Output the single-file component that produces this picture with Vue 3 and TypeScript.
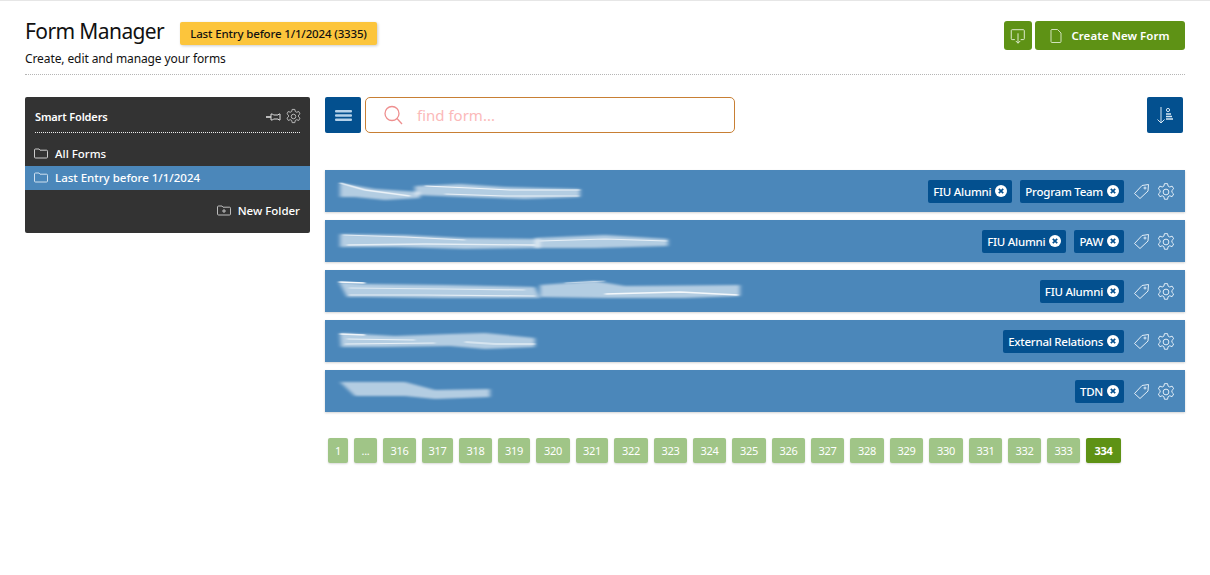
<script setup lang="ts">
interface Stroke { d: string; w: number; o: number }
interface Row { tags: string[]; fill: string[]; streaks: Stroke[] }

const rows: Row[] = [
  {
    tags: ['FIU Alumni', 'Program Team'],
    fill: ['M5 13 L40 19 L85 22 L85 28 L50 30 L20 27 L5 27 Z', 'M80 16 L125 14 L170 17 L245 19 L245 27 L190 29 L130 27 L80 25 Z'],
    streaks: [
      { d: 'M5 13 L30 20 L75 26', w: 1.6, o: 0.75 },
      { d: 'M90 16 L135 18 L175 20 L245 20', w: 1.2, o: 0.85 },
      { d: 'M110 24 L170 26 L244 26', w: 1.2, o: 0.7 },
      { d: 'M120 13 L150 13', w: 1, o: 0.5 },
    ],
  },
  {
    tags: ['FIU Alumni', 'PAW'],
    fill: ['M5 14 L70 15 L130 18 L205 19 L205 28 L130 29 L60 27 L5 27 Z', 'M200 18 L270 15 L333 19 L333 26 L260 28 L200 28 Z'],
    streaks: [
      { d: 'M8 15 L70 17 L130 20', w: 1.2, o: 0.7 },
      { d: 'M12 25 L90 24 L200 25', w: 1.3, o: 0.65 },
      { d: 'M205 21 L270 19 L332 21', w: 1.2, o: 0.7 },
    ],
  },
  {
    tags: ['FIU Alumni'],
    fill: ['M4 12 L30 14 L110 15 L200 17 L205 28 L110 28 L30 27 L12 27 Z', 'M205 15 L260 11 L290 16 L405 15 L405 26 L350 28 L270 28 L205 27 Z'],
    streaks: [
      { d: 'M4 12 L30 13', w: 1.6, o: 0.95 },
      { d: 'M14 18 L110 19 L190 20', w: 1.2, o: 0.6 },
      { d: 'M14 25 L90 25 L200 26', w: 1.2, o: 0.65 },
      { d: 'M230 13 L270 11', w: 1.2, o: 0.5 },
      { d: 'M270 24 L345 22 L403 25', w: 1.5, o: 0.85 },
      { d: 'M380 15 L405 15', w: 1.4, o: 0.7 },
    ],
  },
  {
    tags: ['External Relations'],
    fill: ['M5 13 L60 16 L115 14 L150 13 L200 18 L200 27 L150 29 L115 26 L50 27 L6 27 Z'],
    streaks: [
      { d: 'M5 14 L30 15', w: 1.4, o: 0.85 },
      { d: 'M12 19 L80 20', w: 1, o: 0.75 },
      { d: 'M10 24 L100 23', w: 1.2, o: 0.7 },
      { d: 'M130 22 L160 24 L200 24', w: 2, o: 0.45 },
    ],
  },
  {
    tags: ['TDN'],
    fill: ['M5 12 L70 12 L100 20 L155 19 L155 27 L100 29 L70 26 L20 26 Z'],
    streaks: [
      { d: 'M5 12 L65 12', w: 1.2, o: 0.8 },
      { d: 'M110 19 L155 19', w: 1, o: 0.65 },
      { d: 'M120 25 L155 25', w: 1.2, o: 0.55 },
    ],
  },
]

interface Page { label: string; width: number }
const steps = [39, 37, 39, 38, 40, 38, 40, 39, 39, 40, 39, 39, 40, 39, 40, 39, 39, 39]
const pages: Page[] = [
  { label: '1', width: 20 },
  { label: '...', width: 23 },
  ...steps.map((s, i) => ({ label: String(316 + i), width: s - 6 })),
]
const tagIcon = 'M1.5 10.5 L9 2.5 L15.5 1.5 L15 8 L7 15.5 Z'
const gear = 'M7.6 1.5 h2.8 l.5 2.2 l1.5 .8 l2.1 -.8 l1.4 2.4 l-1.6 1.5 v1.7 l1.6 1.5 l-1.4 2.4 l-2.1 -.8 l-1.5 .8 l-.5 2.3 h-2.8 l-.5 -2.3 l-1.5 -.8 l-2.1 .8 l-1.4 -2.4 l1.6 -1.5 v-1.7 l-1.6 -1.5 l1.4 -2.4 l2.1 .8 l1.5 -.8 Z'
</script>

<template>
  <div class="page">
    <header class="head">
      <div class="head-left">
        <div class="title-line">
          <h1>Form Manager</h1>
          <span class="badge">Last Entry before 1/1/2024 (3335)</span>
        </div>
        <p>Create, edit and manage your forms</p>
      </div>
      <div class="head-actions">
        <button class="green icon-btn" aria-label="Import">
          <svg width="18" height="18" viewBox="0 0 20 20" fill="none" stroke="#dfeccf" stroke-width="1.1">
            <path d="M6.5 14 H3.5 a1 1 0 0 1 -1 -1 V4 a1 1 0 0 1 1 -1 H16 a1 1 0 0 1 1 1 V13 a1 1 0 0 1 -1 1 H13" />
            <path d="M10 7 V18 M7.5 15.5 L10 18 L12.5 15.5" />
          </svg>
        </button>
        <button class="green create">
          <svg width="12" height="14" viewBox="0 0 12 14" fill="none" stroke="#dfeccf" stroke-width=".9">
            <path d="M1.5 .5 H7.5 L11 4 V12.5 a1 1 0 0 1 -1 1 H2 a1 1 0 0 1 -1 -1 V1 Z" />
          </svg>
          Create New Form
        </button>
      </div>
    </header>

    <div class="body">
      <aside class="panel">
        <div class="panel-head">
          <span>Smart Folders</span>
          <div class="panel-icons">
            <svg width="15" height="10" viewBox="0 0 15 10" fill="none" stroke="#ddd" stroke-width="1">
              <path d="M0 5 H5" stroke-width="1.6" /><path d="M5 2 H6.5 L7.5 3 H12 L13 2 H14 V8 H13 L12 7 H7.5 L6.5 8 H5 Z" />
            </svg>
            <svg width="17" height="17" viewBox="0 0 18 18" fill="none" stroke="#ccc" stroke-width=".9">
              <path :d="gear" /><circle cx="9" cy="9" r="2.4" />
            </svg>
          </div>
        </div>
        <div class="folder">
          <svg class="fi" width="14" height="11" viewBox="0 0 14 11" fill="none" stroke="#ccc" stroke-width="1"><path d="M.5 2 a1 1 0 0 1 1 -1 H5 L6 2.2 H12.5 a1 1 0 0 1 1 1 V9 a1 1 0 0 1 -1 1 H1.5 a1 1 0 0 1 -1 -1 Z" /></svg>
          All Forms
        </div>
        <div class="folder on">
          <svg class="fi" width="14" height="11" viewBox="0 0 14 11" fill="none" stroke="#cfe0ef" stroke-width="1"><path d="M.5 2 a1 1 0 0 1 1 -1 H5 L6 2.2 H12.5 a1 1 0 0 1 1 1 V9 a1 1 0 0 1 -1 1 H1.5 a1 1 0 0 1 -1 -1 Z" /></svg>
          Last Entry before 1/1/2024
        </div>
        <div class="new-folder">
          <svg width="14" height="11" viewBox="0 0 14 11" fill="none" stroke="#ccc" stroke-width=".9"><path d="M.5 2 a1 1 0 0 1 1 -1 H5 L6 2.2 H12.5 a1 1 0 0 1 1 1 V9 a1 1 0 0 1 -1 1 H1.5 a1 1 0 0 1 -1 -1 Z M7 4 V8 M5 6 H9" /></svg>
          New Folder
        </div>
      </aside>

      <main class="main">
        <div class="tools">
          <button class="blue" aria-label="Menu">
            <svg width="17" height="11" viewBox="0 0 17 11" fill="#b5d2ea"><rect y="0" width="17" height="2.6" rx="1" /><rect y="4.2" width="17" height="2.6" rx="1" /><rect y="8.4" width="17" height="2.6" rx="1" /></svg>
          </button>
          <div class="search">
            <svg width="19" height="20" viewBox="0 0 19 20" fill="none" stroke="#ee8f8f" stroke-width="1.3"><circle cx="8" cy="8.5" r="7" /><path d="M13 13.5 L18 19" /></svg>
            <span>find form...</span>
          </div>
          <button class="blue sort" aria-label="Sort">
            <svg width="18" height="18" viewBox="0 0 18 18" fill="none" stroke="#d8e7f3" stroke-width="1">
              <path d="M5 1 V17 M1.5 13.5 L5 17 L8.5 13.5" />
              <circle cx="12" cy="4" r="1.6" />
              <path d="M10 8 H15 M10 10.5 H16 M10 13 H17" stroke-width="1.5" />
            </svg>
          </button>
        </div>

        <div class="rows">
          <div v-for="(r, i) in rows" :key="i" class="row">
            <svg class="smear" width="420" height="42" viewBox="0 0 420 42">
              <defs>
                <filter :id="'b' + i" x="-10%" y="-50%" width="120%" height="200%"><feGaussianBlur stdDeviation="2 1.3" /></filter>
                <filter :id="'s' + i" x="-10%" y="-50%" width="120%" height="200%"><feGaussianBlur stdDeviation="1.5 .7" /></filter>
              </defs>
              <path v-for="(d, j) in r.fill" :key="j" :d="d" fill="#fff" fill-opacity=".58" :filter="'url(#b' + i + ')'" />
              <path v-for="(s, j) in r.streaks" :key="'k' + j" :d="s.d" fill="none" stroke="#fff" :stroke-width="s.w" :stroke-opacity="s.o" :filter="'url(#s' + i + ')'" />
            </svg>
            <div class="tags">
              <span v-for="t in r.tags" :key="t" class="tag">
                {{ t }}
                <svg width="12" height="12" viewBox="0 0 12 12"><circle cx="6" cy="6" r="6" fill="#fff" /><path d="M3.8 3.8 L8.2 8.2 M8.2 3.8 L3.8 8.2" stroke="#03508f" stroke-width="1.7" /></svg>
              </span>
            </div>
            <svg class="ti" width="17" height="17" viewBox="0 0 17 17" fill="none" stroke="#e3eef7" stroke-width="1">
              <path :d="tagIcon" /><circle cx="12" cy="5" r="1" />
            </svg>
            <svg class="gi" width="20" height="20" viewBox="0 0 18 18" fill="none" stroke="#e3eef7" stroke-width=".9">
              <path :d="gear" /><circle cx="9" cy="9" r="2.6" />
            </svg>
          </div>
        </div>

        <nav class="pager">
          <span v-for="p in pages" :key="p.label" class="pg" :style="{ width: p.width + 'px' }">{{ p.label }}</span>
          <span class="pg cur">334</span>
        </nav>
      </main>
    </div>
  </div>
</template>

<style>
html, body { margin: 0; background: #fff; }
</style>

<style scoped>
.page {
  width: 1210px;
  height: 575px;
  box-sizing: border-box;
  padding: 0 25px;
  border-top: 1px solid #e6e6e6;
  font-family: "Noto Sans", "Open Sans", sans-serif;
  color: #111;
  overflow: hidden;
}
.head {
  display: flex;
  justify-content: space-between;
  height: 74px;
  box-sizing: border-box;
  border-bottom: 1px dotted #b5b5b5;
}
.title-line { display: flex; align-items: center; gap: 16px; padding-top: 18px; height: 28px; }
h1 { margin: -4px 0 0; font-size: 21px; letter-spacing: -.6px; font-weight: 400; line-height: 28px; color: #111; }
.badge {
  background: #fcc53c;
  border-radius: 2px;
  font-size: 11.5px;
  letter-spacing: -.15px;
  font-weight: 500;
  line-height: 23px;
  padding: 0 10px;
  box-shadow: 1px 1px 3px rgba(0,0,0,.2);
}
p { margin: 4px 0 0; font-size: 12px; letter-spacing: -.1px; line-height: 16px; }
.head-actions { display: flex; gap: 3px; padding-top: 20px; }
button { border: 0; padding: 0; font-family: inherit; display: flex; align-items: center; justify-content: center; }
.green { background: #5e9215; border-radius: 3px; height: 29px; color: #fff; }
.icon-btn { width: 28px; }
.create { width: 150px; gap: 9px; font-size: 11.5px; letter-spacing: .05px; font-weight: 600; }
.body { display: flex; gap: 15px; padding-top: 22px; }
.panel {
  width: 285px;
  height: 136px;
  box-sizing: border-box;
  background: #333;
  border-radius: 2px;
  color: #fff;
  flex: none;
}
.panel-head {
  margin: 0 10px;
  height: 36px;
  box-sizing: border-box;
  border-bottom: 1px dotted #eee;
  display: flex;
  align-items: center;
  justify-content: space-between;
  font-size: 11px;
  letter-spacing: -.15px;
  font-weight: 600;
  padding-top: 4px;
}
.panel-icons { display: flex; align-items: center; gap: 4px; margin-right: -1px; transform: translateX(1px); }
.folder {
  height: 24px;
  display: flex;
  align-items: center;
  padding: 0 0 1px 9px;
  box-sizing: border-box;
  gap: 7px;
  font-size: 11.5px;
  font-weight: 500;
}
.panel-head + .folder { margin-top: 9px; }
.folder.on { background: #4b87ba; }
.new-folder {
  display: flex;
  justify-content: flex-end;
  align-items: center;
  gap: 7px;
  padding: 13px 10px 0 0;
  font-size: 11.5px;
  font-weight: 500;
}
.main { flex: 1; min-width: 0; }
.tools { display: flex; gap: 4px; height: 36px; }
.blue { width: 36px; height: 36px; background: #03508f; border-radius: 2px; flex: none; }
.sort { margin: 0 2px 0 auto; }
.search {
  width: 370px;
  box-sizing: border-box;
  border: 1px solid #c87f34;
  border-radius: 5px;
  display: flex;
  align-items: center;
  gap: 14px;
  padding-left: 18px;
  font-size: 15px;
  color: #fbb9b9;
}
.rows { display: flex; flex-direction: column; gap: 8px; margin-top: 37px; }
.row {
  height: 42px;
  background: #4b87ba;
  box-shadow: 0 1px 2px rgba(0,0,0,.18);
  display: flex;
  align-items: center;
  padding-right: 9px;
}
.smear { margin: 0 auto 0 10px; flex: none; display: block; }
.tags { display: flex; gap: 8px; margin-right: 1px; }
.tag {
  height: 23px;
  background: #03508f;
  border-radius: 2px;
  color: #fff;
  display: flex;
  align-items: center;
  gap: 4px;
  padding: 0 5px;
  font-size: 11.5px;
  letter-spacing: -.25px;
  font-weight: 500;
}
.ti { margin-left: 8px; flex: none; }
.gi { margin: 1px 0 0 6px; flex: none; }
.pager { display: flex; gap: 6px; margin: 26px 0 0 3px; }
.pg {
  height: 25px;
  box-sizing: border-box;
  background: #a0c587;
  border-radius: 2px;
  color: #fff;
  font-size: 11px;
  letter-spacing: -.3px;
  line-height: 25px;
  text-align: center;
  box-shadow: 0 1px 2px rgba(0,0,0,.15);
}
.pg.cur { background: #5e9215; font-weight: 700; width: 35px; }
</style>
